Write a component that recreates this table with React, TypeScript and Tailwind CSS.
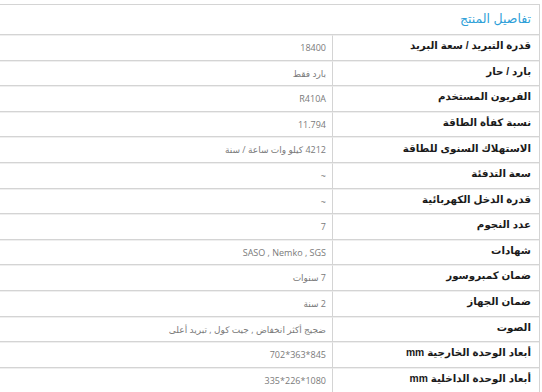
import React from "react";

const rows: [string, string][] = [
  ["قدرة التبريد / سعة البريد", "18400"],
  ["بارد / حار", "بارد فقط"],
  ["الفريون المستخدم", "R410A"],
  ["نسبة كفأة الطاقة", "11.794"],
  ["الاستهلاك السنوى للطاقة", "4212 كيلو وات ساعة / سنة"],
  ["سعة التدفئة", "~"],
  ["قدرة الدخل الكهربائية", "~"],
  ["عدد النجوم", "7"],
  ["شهادات", "SASO , Nemko , SGS"],
  ["ضمان كمبروسور", "7 سنوات"],
  ["ضمان الجهاز", "2 سنة"],
  ["الصوت", "ضجيج أكثر انخفاض , جيت كول , تبريد أعلى"],
  ["أبعاد الوحدة الخارجية mm", "845*363*702"],
  ["أبعاد الوحدة الداخلية mm", "1080*226*335"],
];

export default function App() {
  return (
    <div
      className="w-[542px] h-[392px] overflow-hidden bg-white pt-[4px]"
      style={{ fontFamily: '"Liberation Sans", "DejaVu Sans", sans-serif' }}
    >
      <div dir="rtl" className="w-[540px] border-t border-r border-[#d4d4d4]">
        <div className="h-[30px] flex items-center pr-[8px] pb-[1px] border-b border-[#d4d4d4]">
          <span className="text-[12.5px] text-[#2f9fd8] leading-none">تفاصيل المنتج</span>
        </div>
        {rows.map(([k, v], i) => (
          <div
            key={i}
            className={`flex h-[25.6px] ${i < rows.length - 1 ? "border-b border-[#d4d4d4]" : ""}`}
          >
            <div className="w-[207px] shrink-0 border-l border-[#d4d4d4] flex items-center pr-[8px] pb-[3px] border-t border-t-[#efefef]">
              <span className="text-[10.3px] leading-none font-bold text-[#1a1a1a]">{k}</span>
            </div>
            <div className="flex-1 flex items-center pr-[6px] border-t border-t-[#efefef]">
              <span
                className="text-[9px] text-[#7a7a7a]"
                style={{ fontFamily: '"Open Sans", "DejaVu Sans", sans-serif' }}
              >
                {v}
              </span>
            </div>
          </div>
        ))}
      </div>
    </div>
  );
}
